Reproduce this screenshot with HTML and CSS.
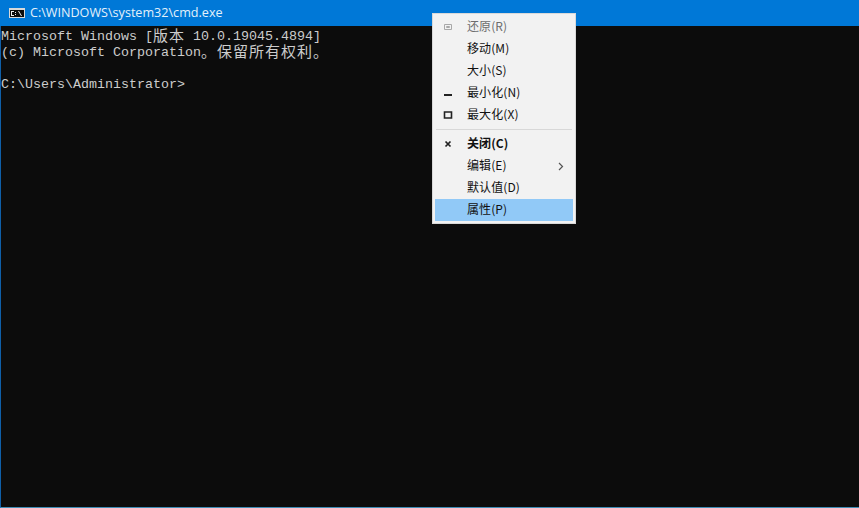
FILE: index.html
```html
<!DOCTYPE html>
<html lang="zh-CN">
<head>
<meta charset="utf-8">
<title>cmd.exe</title>
<link rel="stylesheet" href="styles.css">
</head>
<body>
<div class="window">
  <header class="titlebar">
    <svg class="app-icon" width="16" height="16" viewBox="0 0 16 16">
      <rect x="0" y="3" width="16" height="10" fill="#d8d8d8"/>
      <rect x="1" y="5" width="14" height="7" fill="#0c0c0c"/>
      <path d="M2 6h3v1H3v3h2v1H2zM6 7h1v1H6zM6 9h1v1H6zM9 6h1l3 5h-1z" fill="#f0f0f0"/>
    </svg>
    <span class="title">C:\WINDOWS\system32\cmd.exe</span>
  </header>
  <main class="console">
    <div class="line">Microsoft Windows [<span class="cjk">版本</span> 10.0.19045.4894]</div>
    <div class="line">(c) Microsoft Corporation<span class="cjk">。保留所有权利。</span></div>
    <div class="line"></div>
    <div class="line">C:\Users\Administrator&gt;</div>
  </main>
</div>
<nav class="menu">
  <div class="item disabled">
    <span class="glyph"><svg width="10" height="10" viewBox="0 0 10 10"><path d="M1.5 2.5h7v5h-7zM3.5 4.5h3v1h-3z" fill="none" stroke="#a8a8a8"/></svg></span>
    <span class="label">还原(R)</span>
  </div>
  <div class="item"><span class="glyph"></span><span class="label">移动(M)</span></div>
  <div class="item"><span class="glyph"></span><span class="label">大小(S)</span></div>
  <div class="item">
    <span class="glyph"><svg width="10" height="10" viewBox="0 0 10 10"><rect x="1" y="6" width="8" height="2" fill="#222"/></svg></span>
    <span class="label">最小化(N)</span>
  </div>
  <div class="item">
    <span class="glyph"><svg width="10" height="10" viewBox="0 0 10 10"><path d="M1.5 2h7v6h-7z" fill="none" stroke="#222" stroke-width="1.6"/></svg></span>
    <span class="label">最大化(X)</span>
  </div>
  <div class="separator"></div>
  <div class="item strong">
    <span class="glyph"><svg width="10" height="10" viewBox="0 0 10 10"><path d="M2.5 2.5l5 5M7.5 2.5l-5 5" fill="none" stroke="#222" stroke-width="1.7"/></svg></span>
    <span class="label">关闭(C)</span>
  </div>
  <div class="item">
    <span class="glyph"></span><span class="label">编辑(E)</span>
    <svg class="arrow" width="6" height="9" viewBox="0 0 6 9"><path d="M1 1l3.5 3.5L1 8" fill="none" stroke="#555" stroke-width="1.2"/></svg>
  </div>
  <div class="item"><span class="glyph"></span><span class="label">默认值(D)</span></div>
  <div class="item active"><span class="glyph"></span><span class="label">属性(P)</span></div>
</nav>
</body>
</html>
```
FILE: styles.css
```css
* { box-sizing: border-box; }
html, body { margin: 0; height: 100%; overflow: hidden; }
body { background: #0c0c0c; }

.window {
  display: flex;
  flex-direction: column;
  height: 508px;
  border-left: 1px solid #0f5fa8;
  border-bottom: 1px solid #3f8db5;
}
.titlebar {
  flex: none;
  height: 26px;
  margin-left: -1px;
  background: #0078d7;
  display: flex;
  align-items: center;
  gap: 5px;
  padding: 0 0 1px 9px;
  color: #e4f1fb;
  font: 12.6px/16px "Open Sans", "Liberation Sans", sans-serif;
}
.app-icon { flex: none; }
.console {
  flex: 1;
  padding-top: 3px;
  background: #0c0c0c;
  color: #cccccc;
  font: 13.33px/16px "Liberation Mono", monospace;
}
.line { height: 16px; white-space: pre; }
.cjk {
  font: 15px/0 "Noto Sans CJK SC", sans-serif;
  letter-spacing: 1px;
  vertical-align: -1px;
}

.menu {
  position: absolute;
  left: 432px;
  top: 13px;
  width: 144px;
  height: 211px;
  padding: 2px;
  background: #f2f2f2;
  border: 1px solid #d9d9d9;
  color: #111;
  font: 12px/18px "Noto Sans CJK SC", sans-serif;
}
.item {
  display: flex;
  align-items: center;
  height: 22px;
  padding-right: 9px;
}
.glyph {
  flex: none;
  width: 26px;
  height: 22px;
  display: flex;
  align-items: center;
  justify-content: center;
  margin-right: 6px;
}
.label { flex: 1; padding-bottom: 2px; letter-spacing: 0.1px; }
.disabled { color: #6d6d6d; }
.strong { font-weight: 700; }
.active { background: #91c9f7; }
.arrow { flex: none; }
.separator {
  height: 1px;
  margin: 3px 1px 3px 1px;
  background: #d8d8d8;
}
```
